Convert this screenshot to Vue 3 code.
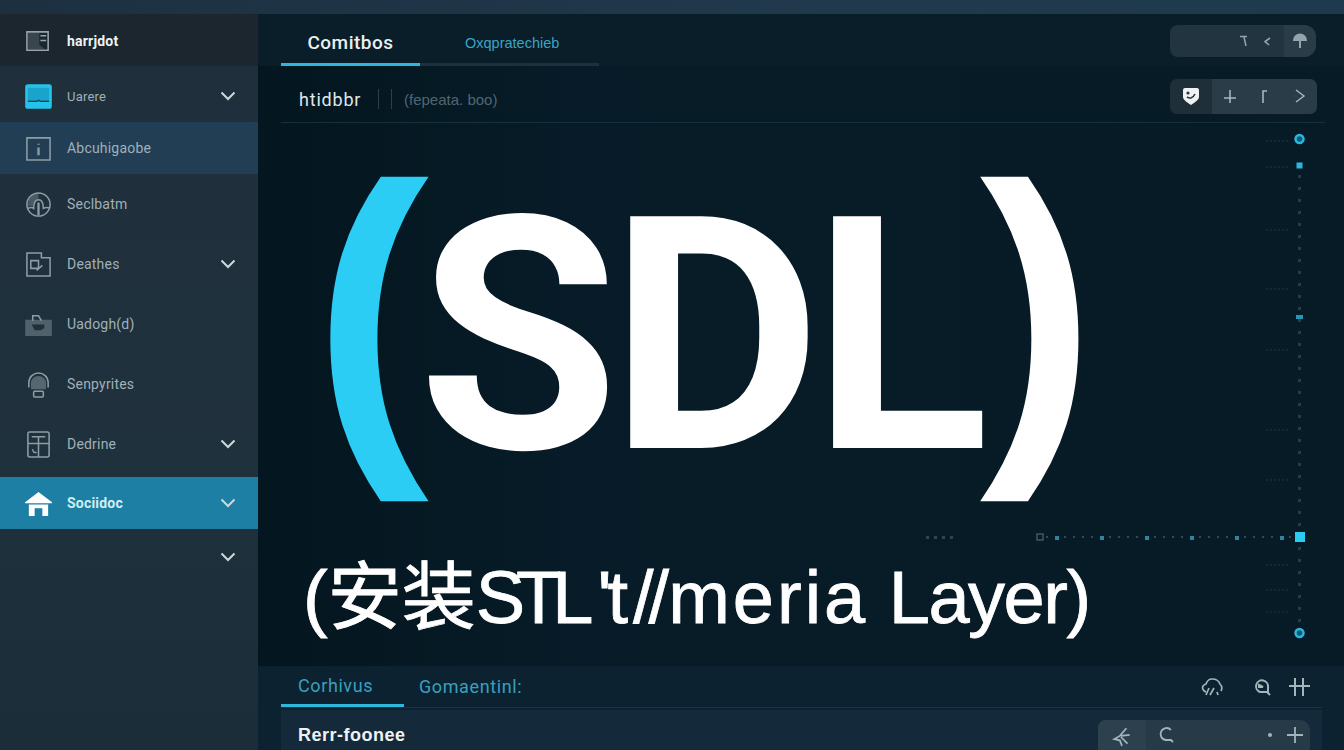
<template>
  <div class="screen">
    <div class="topbar"></div>
    <div class="body">
      <aside class="side">
        <div v-for="item in navItems" :key="item.label + item.h" class="nav" :class="item.cls" :style="{ height: item.h + 'px' }">
          <svg v-if="item.icon" class="nav-icon" viewBox="0 0 28 28" fill="none" stroke="currentColor" stroke-width="1.6" v-html="item.icon"></svg>
          <span class="nav-label">{{ item.label }}</span>
          <svg v-if="item.arrow" class="chev" viewBox="0 0 16 10" fill="none" stroke="currentColor" stroke-width="2"><path d="M1.5 1.5 8 8l6.5-6.5" /></svg>
        </div>
      </aside>

      <main class="main">
        <div class="tabs">
          <div class="tab tab-on">Comitbos</div>
          <div class="tab tab-off">Oxqpratechieb</div>
          <div class="pill">
            <svg class="tiny" viewBox="0 0 12 14" fill="none" stroke="currentColor" stroke-width="1.5"><path d="M2 2.5h7M6 3l2 9" /></svg>
            <svg class="tiny" viewBox="0 0 12 14" fill="none" stroke="currentColor" stroke-width="1.6"><path d="M9 4 4 7.5 8 11" /></svg>
            <span class="pill-end">
              <svg class="tiny-lg" viewBox="0 0 18 18" fill="currentColor"><path d="M9 1.5a7 7 0 0 1 7 7.5H10v7H8V9H2a7 7 0 0 1 7-7.5Z" /></svg>
            </span>
          </div>
        </div>

        <div class="toolbar">
          <span class="tool-title">htidbbr</span>
          <span class="sep"></span>
          <span class="sep"></span>
          <span class="tool-sub">(fepeata. boo)</span>
          <div class="tool-group">
            <span class="face">
              <svg width="18" height="20" viewBox="0 0 18 20"><path d="M3 2h12a2 2 0 0 1 2 2v7c0 3-4 5-8 8-4-3-8-5-8-8V4a2 2 0 0 1 2-2Z" fill="#eef2f3" /><circle cx="6" cy="7" r="1.6" fill="#26343f" /><path d="M5 11c3 2 6 1 8-3" stroke="#26343f" stroke-width="1.6" fill="none" /></svg>
            </span>
            <span class="tool-btns">
              <svg class="tool-ic" viewBox="0 0 16 16" fill="none" stroke="currentColor" stroke-width="1.6"><path d="M8 2v13M2 10h12" /></svg>
              <svg class="tool-ic" viewBox="0 0 16 16" fill="none" stroke="currentColor" stroke-width="1.6"><path d="M6 15V3h4" /></svg>
              <svg class="tool-ic" viewBox="0 0 16 16" fill="none" stroke="currentColor" stroke-width="1.4"><path d="m4 2 8 6-8 6" /></svg>
            </span>
          </div>
        </div>

        <section class="hero">
          <svg class="rail" width="1086" height="542" viewBox="258 124 1086 542">
            <g v-for="d in railDots" :key="d.x + '-' + d.y">
              <rect :x="d.x" :y="d.y" :width="d.w" :height="d.w" :fill="d.c" :opacity="d.o" />
            </g>
            <circle cx="1299.5" cy="140" r="4" fill="#0e5c73" stroke="#2bb6dc" stroke-width="2.5" />
            <rect x="1296.5" y="163.5" width="6" height="6" fill="#2bb6dc" />
            <rect x="1296" y="316" width="7" height="4" fill="#2bb6dc" opacity="0.8" />
            <rect x="1295" y="533" width="10" height="10" fill="#2ccbf2" />
            <rect x="1037" y="535" width="6" height="6" fill="none" stroke="#5b7480" />
            <circle cx="1299.5" cy="634" r="4" fill="#0e5c73" stroke="#2bb6dc" stroke-width="2.5" />
          </svg>
          <div class="big">
            <span class="paren paren-l">(</span>
            <span class="sdl">SDL</span>
            <span class="paren paren-r">)</span>
          </div>
          <div class="sub">(安装<span class="s-stl">STL</span><span class="s-t">'t</span><span class="s-sl">//</span><span class="s-me">meria</span> <span class="s-la">Layer)</span></div>
        </section>

        <section class="bottom">
          <div class="b-tabs">
            <div class="b-tab b-on">Corhivus</div>
            <div class="b-tab b-off">Gomaentinl:</div>
            <div class="b-icons">
              <svg width="24" height="24" viewBox="0 0 24 24" fill="none" stroke="currentColor" stroke-width="1.7"><path d="M6 17c-3-1-4-4-3-6 1-1 2-2 3-2 1-3 3-5 6-5 4 0 7 2 8 5 2 2 2 5 1 7M9 13l-3 7M14 13l-4 7M17 17l1 3" /></svg>
              <svg class="b-mid" width="22" height="22" viewBox="0 0 22 22" fill="none" stroke="currentColor" stroke-width="2"><path d="M17 16H9a6 6 0 1 1 8-5v6l2 2" /><path d="M8 9l4 2H8z" /></svg>
              <svg width="24" height="24" viewBox="0 0 24 24" fill="none" stroke="currentColor" stroke-width="2"><path d="M8 3v18M16 3v18M2 11h21" /></svg>
            </div>
          </div>
          <div class="b-row">
            <span class="b-title">Rerr-foonee</span>
            <div class="b-group">
              <span class="b-first">
                <svg width="22" height="22" viewBox="0 0 20 20" fill="none" stroke="currentColor" stroke-width="1.6"><path d="M14 2 8 9l-5 3 5 1 2 5M9 9l8-1M9 10l6 6" /></svg>
              </span>
              <svg width="18" height="18" viewBox="0 0 18 18" fill="none" stroke="currentColor" stroke-width="1.8"><path d="M13 4a6 6 0 1 0-5 10h5l2 2" /></svg>
              <span class="b-dot"></span>
              <svg width="18" height="18" viewBox="0 0 18 18" fill="none" stroke="currentColor" stroke-width="1.8"><path d="M9 1v16M1 9h16" /></svg>
            </div>
          </div>
        </section>
      </main>
    </div>
  </div>
</template>

<script setup>
const navItems = [
  { label: 'harrjdot', h: 52, cls: 'nav-head', icon: '<path d="M2 4h22v19H2z"/><path d="M4 6h10v12l4 3H4z" fill="currentColor" opacity=".25"/><path d="M16 8h6M16 13h6"/>' },
  { label: 'Uarere', h: 56, arrow: true, cls: 'nav-blue', icon: '<rect x="1" y="2" width="26" height="24" rx="2" fill="#25c3ea" stroke="#25c3ea"/><path d="M3 5h22v13H3z" fill="#1aa4cc" stroke="none"/><path d="M3 19h9l2-1 2 1h9" stroke="#14475c"/>' },
  { label: 'Abcuhigaobe', h: 52, cls: 'nav-sel', icon: '<path d="M2 3h24v23H2z"/><path d="M14 9v1M14 13v8" stroke-width="2.4"/>' },
  { label: 'Seclbatm', h: 60, icon: '<circle cx="14" cy="14" r="12"/><path d="M3 18c2-1 5-1 6 0 0-6 2-9 5-9s5 3 5 9c2-1 5-1 7 0" /><path d="M14 12v13" stroke-width="2.4"/><path d="M4 9c3-6 7-7 10-7v6c-3 0-5 3-6 8-2-1-3-1-5 0z" fill="currentColor" opacity=".4" stroke="none"/>' },
  { label: 'Deathes', h: 60, arrow: true, icon: '<path d="M2 2h15v5h9v19H2z"/><path d="M6 10h8v8H6zM12 20l6-5" />' },
  { label: 'Uadogh(d)', h: 60, icon: '<path d="M1 10h26v15H1z" fill="currentColor" opacity=".45"/><path d="M8 10V5h6l3 5"/><path d="M7 14h13v4l-4 2H10z" fill="#1f2f3b" stroke="none"/>' },
  { label: 'Senpyrites', h: 60, icon: '<path d="M4 17V12C4 6 9 2 14 2s10 4 10 10v5"/><path d="M7 18v-6c0-3 3-6 7-6s7 3 7 6v6z" fill="currentColor" opacity=".5"/><rect x="9" y="21" width="10" height="6" rx="1"/>' },
  { label: 'Dedrine', h: 60, arrow: true, icon: '<rect x="3" y="1" width="22" height="26" rx="2"/><path d="M3 13h22M14 13v14M7 6h14M14 6v7M8 19c0 3 2 4 4 3" />' },
  { label: 'Sociidoc', h: 52, arrow: true, cls: 'nav-teal', icon: '<path d="M1 13 14 3l13 10z" fill="#fff" stroke="#fff"/><path d="M4 15h20v12h-6v-8h-8v8H4z" fill="#fff" stroke="none"/>' },
  { label: '', h: 56, arrow: true, cls: 'nav-empty' }
];

// точки на пунктирных линиях справа и снизу
const railDots = [];
for (let y = 176; y < 630; y += 12) {
  if (y % 3 === 0) continue;
  railDots.push({ x: 1298, y, w: 3, c: '#5d7a88', o: 0.35 });
}
for (let x = 1046; x < 1292; x += 9) {
  const hi = x % 5 === 0;
  railDots.push({ x, y: 537, w: hi ? 4 : 2, c: hi ? '#3f9dbd' : '#557080', o: hi ? 0.8 : 0.55 });
}
for (let x = 926; x < 952; x += 8) {
  railDots.push({ x, y: 537, w: 3, c: '#4a606c', o: 0.6 });
}
for (const y of [141, 167, 230, 289, 350, 430, 480, 565, 590, 612]) {
  for (let x = 1266; x < 1290; x += 4) {
    railDots.push({ x, y, w: 2, c: '#3d5663', o: 0.22 });
  }
}
</script>

<style scoped>
.screen {
  width: 1344px;
  height: 750px;
  overflow: hidden;
  display: flex;
  flex-direction: column;
  background: #061a25;
  font-family: "Liberation Sans", "Noto Sans CJK SC", sans-serif;
}
.topbar {
  height: 14px;
  flex: none;
  background: linear-gradient(90deg, #1c3040, #21394c 60%, #1f3a4e);
}
.body {
  flex: 1;
  display: flex;
  min-height: 0;
}

/* Левое меню */
.side {
  width: 258px;
  flex: none;
  background: linear-gradient(180deg, #1f2f3b, #20313e 60%, #1c2d3a);
}
.nav {
  display: flex;
  align-items: center;
  box-sizing: border-box;
  padding: 0 22px 0 25px;
  color: #9fb0b8;
  font-size: 14px;
}
.nav-icon {
  width: 27px;
  height: 27px;
  flex: none;
  color: #8d9da5;
}
.nav-label {
  margin-left: 15px;
  flex: 1;
  font-family: Roboto, sans-serif;
  letter-spacing: 0.2px;
}
.chev {
  width: 16px;
  height: 10px;
  color: #ccd8dc;
}
.nav-head {
  background: #1b262f;
  color: #eef2f3;
  font-weight: 700;
  padding-top: 2px;
}
.nav-head .nav-icon {
  color: #97a5ab;
}
.nav-blue {
  padding-top: 4px;
}
.nav-blue .nav-label {
  font-size: 13px;
}
.nav-sel {
  background: #223e55;
}
.nav-teal {
  margin-top: 3px;
  background: #1c7fa3;
  color: #cfeef6;
  font-weight: 700;
}
.nav-teal .nav-icon {
  color: #fff;
}
.nav-empty {
  padding-left: 25px;
}

/* Основная часть */
.main {
  flex: 1;
  min-width: 0;
  display: flex;
  flex-direction: column;
  background: linear-gradient(90deg, #04161f, #071c28 30%, #071b26);
}
.tabs {
  height: 52px;
  flex: none;
  display: flex;
  align-items: stretch;
  padding: 0 28px 0 23px;
  background: #0a1e2a;
}
.tab {
  display: flex;
  align-items: center;
  padding-top: 8px;
  border-bottom: 3px solid #1b3140;
  box-sizing: border-box;
}
.tab-on {
  width: 139px;
  justify-content: center;
  color: #e8f0f2;
  font-family: Roboto, sans-serif;
  font-weight: 500;
  font-size: 19px;
  letter-spacing: 0.5px;
  border-bottom-color: #2fb6dc;
}
.tab-off {
  width: 179px;
  padding-left: 45px;
  color: #3aa4c4;
  font-size: 14.5px;
  margin-right: auto;
}
.pill {
  align-self: center;
  width: 146px;
  height: 32px;
  margin-top: 2px;
  display: flex;
  align-items: center;
  justify-content: flex-end;
  gap: 11px;
  background: #22343f;
  border-radius: 8px 12px 12px 8px;
  color: #94a6ad;
}
.tiny {
  width: 12px;
  height: 14px;
}
.tiny-lg {
  width: 18px;
  height: 18px;
}
.pill-end {
  width: 32px;
  height: 32px;
  display: flex;
  align-items: center;
  justify-content: center;
  background: #2a3c48;
  border-radius: 0 12px 12px 0;
}
.toolbar {
  height: 57px;
  flex: none;
  margin: 0 19px 0 23px;
  padding: 0 8px 0 18px;
  box-sizing: border-box;
  display: flex;
  align-items: center;
  border-bottom: 1px solid #15303d;
}
.tool-title {
  width: 79px;
  margin-top: 10px;
  color: #dfe8ea;
  font-size: 18px;
  letter-spacing: 0.8px;
  font-family: Roboto, sans-serif;
}
.sep {
  width: 1px;
  height: 20px;
  margin-top: 9px;
  margin-right: 12px;
  background: #2a404c;
}
.tool-sub {
  margin-top: 10px;
  margin-right: auto;
  color: #51656f;
  font-size: 15px;
}
.tool-group {
  width: 147px;
  height: 35px;
  margin-top: 4px;
  display: flex;
  border-radius: 7px;
  overflow: hidden;
}
.face {
  width: 42px;
  display: flex;
  align-items: center;
  justify-content: center;
  background: #1f2f3a;
}
.tool-btns {
  flex: 1;
  display: flex;
  align-items: center;
  justify-content: space-around;
  background: #2a3c47;
  color: #a6b7bd;
}
.tool-ic {
  width: 16px;
  height: 16px;
}

/* Большой заголовок */
.hero {
  position: relative;
  flex: 1;
  min-height: 0;
  display: flex;
  flex-direction: column;
  padding-left: 45px;
}
.rail {
  position: absolute;
  left: 0;
  top: 0;
}
.big {
  position: relative;
  height: 400px;
  display: flex;
  align-items: center;
  color: #fff;
  padding-left: 10px;
}
.paren {
  font-size: 348px;
  font-weight: 700;
  line-height: 344px;
  margin-top: -28px;
}
.paren-l {
  color: #2bcdf5;
  margin-right: -11px;
}
.paren-r {
  margin-left: 0;
}
.sdl {
  margin-top: 28px;
  font-family: Roboto, sans-serif;
  font-weight: 700;
  font-size: 326px;
  line-height: 344px;
  letter-spacing: -9px;
}
.sub {
  position: relative;
  margin-top: 35px;
  color: #fff;
  font-size: 74px;
  line-height: 80px;
  white-space: nowrap;
  -webkit-text-stroke: 0.8px #fff;
}
.s-stl {
  letter-spacing: -9px;
}
.s-t {
  margin-left: 13px;
  letter-spacing: -4px;
}
.s-sl {
  margin-left: 9px;
  letter-spacing: -5px;
}
.s-me {
  margin-left: 4px;
  letter-spacing: 3px;
}
.s-la {
  letter-spacing: -1.5px;
}

/* Нижняя панель */
.bottom {
  height: 84px;
  flex: none;
  background: #0d2230;
  padding: 0 22px 0 23px;
  overflow: hidden;
}
.b-tabs {
  height: 42px;
  display: flex;
  align-items: stretch;
  border-bottom: 1px solid #1c3340;
  box-sizing: border-box;
}
.b-tab {
  display: flex;
  align-items: center;
  font-size: 18px;
  letter-spacing: 0.6px;
  color: #38a0bf;
  font-family: Roboto, sans-serif;
}
.b-on {
  width: 123px;
  padding-left: 17px;
  border-bottom: 3px solid #2fb6dc;
  box-sizing: border-box;
}
.b-off {
  margin-left: 15px;
  margin-right: auto;
}
.b-icons {
  display: flex;
  align-items: center;
  color: #a3b5ba;
  padding-right: 11px;
}
.b-mid {
  margin: 0 14px 0 27px;
}
.b-row {
  height: 42px;
  margin-top: 2px;
  padding: 0 12px 0 17px;
  display: flex;
  align-items: flex-start;
  background: #142a3a;
}
.b-title {
  margin-top: 15px;
  margin-right: auto;
  color: #eef2f3;
  font-weight: 700;
  font-size: 18px;
  letter-spacing: 0.5px;
}
.b-group {
  margin-top: 10px;
  width: 212px;
  height: 40px;
  display: flex;
  align-items: flex-start;
  padding-top: 6px;
  padding-right: 6px;
  box-sizing: border-box;
  background: #263a48;
  border-radius: 8px 10px 0 0;
  color: #a3b5ba;
}
.b-first {
  width: 48px;
  height: 34px;
  margin-top: -6px;
  display: flex;
  align-items: center;
  justify-content: center;
  margin-right: 12px;
  background: #2d404d;
  border-radius: 8px 0 0 0;
}
.b-dot {
  width: 4px;
  height: 4px;
  margin: 7px 14px 0 auto;
  background: #a3b5ba;
  border-radius: 50%;
}
</style>
